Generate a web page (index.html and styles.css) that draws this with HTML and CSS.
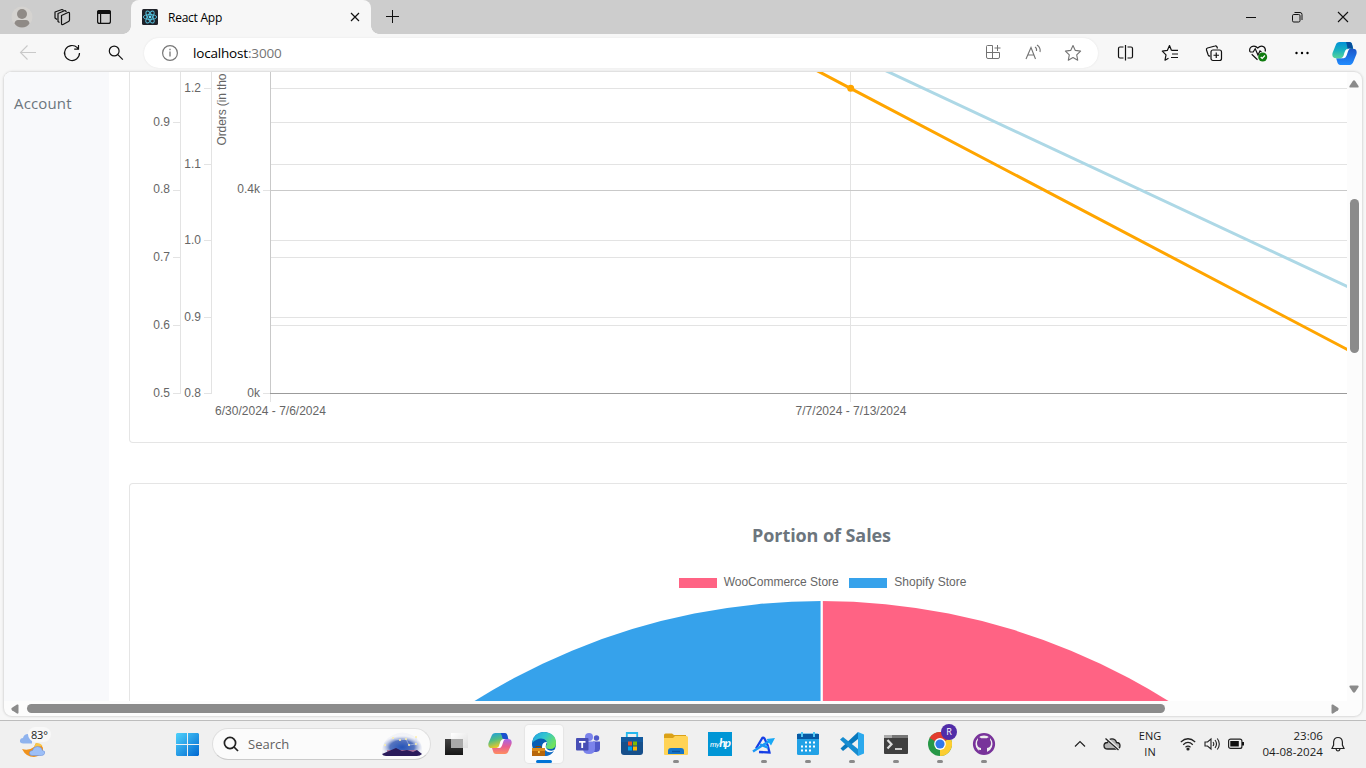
FILE: index.html
```html
<!DOCTYPE html>
<html lang="en">
<head>
<meta charset="utf-8">
<title>React App</title>
<link rel="stylesheet" href="styles.css">
</head>
<body>
<div class="screen">
  <header class="tabbar">
    <div class="tabbar-tools">
      <svg class="tool" viewBox="0 0 24 24" width="24" height="24"><circle cx="12" cy="12" r="10.500" fill="#d5d3d0"/><circle cx="12" cy="9" r="5" fill="#8f8a86"/><path d="M4.500 18.500Q5 15 8 15h8q3 0 3.500 3.500Q17 22.500 12 22.500T4.500 18.500z" fill="#8f8a86"/></svg>
      <svg class="tool" viewBox="0 0 24 24" width="24" height="24" fill="none" stroke="#111" stroke-width="1.200" stroke-linejoin="round"><path d="M11.500 10.500 18 7.500q1.500-.5 1.500 1v6.500q0 1-1 1.500l-5.500 3q-1.500.5-1.500-1z"/><path d="M9.500 17.500 8 16.500V8.500L15 5.500l1.500 1.300M7 14.500l-2-1.500V7l7-2.500 1.500.8"/></svg>
      <svg class="tool" viewBox="0 0 24 24" width="24" height="24"><rect x="5.600" y="5.600" width="12.800" height="12.800" rx="2" fill="none" stroke="#111" stroke-width="1.200"/><path d="M5 9V7q0-2 2-2h10q2 0 2 2v2zM8 9h1.200v9H8z" fill="#111"/></svg>
    </div>
    <div class="tab">
      <svg viewBox="0 0 16 16" width="16" height="16"><rect width="16" height="16" rx="1.500" fill="#20232a"/><g fill="none" stroke="#56c3df" stroke-width=".9"><ellipse cx="8" cy="8" rx="6.700" ry="2.500"/><ellipse cx="8" cy="8" rx="6.700" ry="2.500" transform="rotate(60 8 8)"/><ellipse cx="8" cy="8" rx="6.700" ry="2.500" transform="rotate(120 8 8)"/></g><circle cx="8" cy="8" r="1.400" fill="#61dafb"/></svg>
      <span class="tab-title">React App</span>
      <svg class="tab-close" viewBox="0 0 10 10" width="10" height="10"><path d="m1 1 8 8M9 1 1 9" stroke="#111" stroke-width="1.200"/></svg>
    </div>
    <svg class="tab-new" viewBox="0 0 14 14" width="14" height="14"><path d="M6.500 0v13M0 6.500h13" stroke="#111"/></svg>
    <div class="window-controls">
      <svg viewBox="0 0 12 12" width="12" height="12"><path d="M1 6.500h10" stroke="#111"/></svg>
      <svg viewBox="0 0 12 12" width="12" height="12" fill="none" stroke="#111"><rect x="1.500" y="3.500" width="7.500" height="7.500" rx="1.300"/><path d="M3.500 1.500H9q2 0 2 2V9"/></svg>
      <svg viewBox="0 0 12 12" width="12" height="12"><path d="m1 1 10 10M11 1 1 11" stroke="#111" stroke-width="1.100"/></svg>
    </div>
  </header>

  <nav class="toolbar">
    <div class="cell"><svg viewBox="0 0 20 20" width="20" height="20" fill="none" stroke="#c9c9c9" stroke-width="1.100"><path d="M18 9.500H2.500M9.500 2.500l-7 7 7 7"/></svg></div>
    <div class="cell"><svg viewBox="0 0 20 20" width="20" height="20" fill="none" stroke="#111" stroke-width="1.200"><path d="M17.500 10a7.500 7.500 0 1 1-2.200-5.300L16.500 6M16.500 2v4.200h-4.300"/></svg></div>
    <div class="cell"><svg viewBox="0 0 20 20" width="20" height="20" fill="none" stroke="#111" stroke-width="1.200"><circle cx="8.200" cy="8" r="4.900"/><path d="m11.800 11.600 5 5"/></svg></div>
    <div class="address">
      <svg viewBox="0 0 18 18" width="18" height="18"><circle cx="9" cy="9" r="7.400" fill="none" stroke="#777" stroke-width="1.200"/><path d="M9 7.600v5M9 4.800v1.500" stroke="#777" stroke-width="1.300"/></svg>
      <span class="url">localhost<span class="port">:3000</span></span>
      <div class="address-actions">
        <svg viewBox="0 0 20 20" width="20" height="20" fill="none" stroke="#737373"><path d="M9.500 2.500H4.500q-1 0-1 1V14q0 1.500 1.500 1.500h10q1.500 0 1.500-1.500V9.500h-13m6-7v13M14.500 2v6M11.500 5h6"/></svg>
        <svg viewBox="0 0 20 20" width="20" height="20" fill="none" stroke="#737373" stroke-width="1.100"><path d="M3 16 8 4.500 12.500 16M4.800 12H11M12 4q2 1.200 1.500 4M14 2q4 2.800 3 7"/></svg>
        <svg viewBox="0 0 20 20" width="20" height="20" fill="none" stroke="#737373" stroke-width="1.100" stroke-linejoin="round"><path d="m10 2.500 2.300 4.900 5.300.7-3.900 3.700 1 5.400-4.700-2.600-4.700 2.600 1-5.400L2.400 8.100l5.300-.7z"/></svg>
      </div>
    </div>
    <div class="actions">
      <div class="cell"><svg viewBox="0 0 20 20" width="20" height="20" fill="none" stroke="#111" stroke-width="1.200"><path d="M7.500 4H4Q2.500 4 2.500 5.500v8Q2.500 15 4 15h3.500m4-11H15q1.500 0 1.500 1.500v8q0 1.500-1.500 1.500h-3.500M9.500 2v15.500"/></svg></div>
      <div class="cell"><svg viewBox="0 0 20 20" width="20" height="20" fill="none" stroke="#111" stroke-width="1.200" stroke-linejoin="round"><path d="M11.500 7.400 9.500 2.500 7.300 7.400l-5 .7 3.700 3.700-1 5.400 3.500-2M11.500 7.400H18M12 11h6M11 14.500h7"/></svg></div>
      <div class="cell"><svg viewBox="0 0 20 20" width="20" height="20" fill="none" stroke="#111" stroke-width="1.200"><path d="M13.500 5.500 13 4q-.5-1.500-2-1L3.500 5Q2 5.500 2.500 7l1.700 5q.5 1.300 2 1.200"/><rect x="7" y="7" width="10.500" height="10.500" rx="2"/><path d="M12.250 9.500v5.500M9.500 12.250H15"/></svg></div>
      <div class="cell"><svg viewBox="0 0 20 20" width="20" height="20" fill="none" stroke="#111" stroke-width="1.200"><path d="M2 9Q.8 5.500 3.500 3.700 7 2 9.700 5q3-3 6-1.300Q18 5.500 17.200 8.500M2 9h3.200l2-3.200L10 12l2-4 1.500 1M3.700 11.300l5.800 5.500"/><circle cx="14.700" cy="14" r="4.500" fill="#107c10" stroke="none"/><path d="m12.700 14 1.500 1.500 2.700-3" stroke="#fff"/></svg></div>
      <div class="cell"><svg viewBox="0 0 20 20" width="20" height="20"><circle cx="4.500" cy="10" r="1.200"/><circle cx="10" cy="10" r="1.200"/><circle cx="15.500" cy="10" r="1.200"/></svg></div>
      <div class="cell cell-copilot"><svg viewBox="0 0 24 24" width="25" height="25"><defs><linearGradient id="cpA" x2="0" y2="1"><stop stop-color="#0091d8"/><stop offset=".5" stop-color="#18b0c0"/><stop offset="1" stop-color="#58d49a"/></linearGradient><linearGradient id="cpB" x2="0" y2="1"><stop stop-color="#1c56c9"/><stop offset="1" stop-color="#218cff"/></linearGradient></defs><path d="M16.500 7.500H20q4.500 0 3.500 5L20.500 20q-1 3-3.500 3H8q-2.500 0-3-3l-1-3.500h4.500q3 0 4-3.500l1-3.500q.8-2 3-2z" fill="url(#cpB)"/><path d="M7.500 1h9q2.500 0 3 3l.8 3.500H16q-3 0-4 3.500l-1 3.500q-.8 2-2.500 2H4q-4.500 0-3.500-5L3.500 4Q4.500 1 7.500 1z" fill="url(#cpA)"/><path d="M13.500 1h3q2.500 0 3 3l.8 3.500H16q-1.500 0-1.500-3z" fill="#064e9c"/><path d="M16 7.500q-2.500 0-3.300 2.500l-1.400 4.500q-.6 2-2.800 2h2.700q2 0 2.800-2.500l1.500-4.500q.5-2 2.500-2z" fill="#fff"/></svg></div>
    </div>
  </nav>

  <section class="viewport">
    <div class="page">
      <aside class="sidebar"><a class="nav-link">Account</a></aside>
      <main class="main">
        <div class="card card-line">
          <svg class="chart" viewBox="130 72 1217 370" width="1217" height="370">
            <path class="grid" d="M271 88.500H1347M271 122.500H1347M271 164.500H1347M271 240.500H1347M271 257.500H1347M271 317.500H1347M271 325.500H1347M850.500 72V402M270.500 394v8"/>
            <path class="grid" d="M180.500 72V394M211.500 72V394M173 122.500h7M173 190.500h7M173 257.500h7M173 325.500h7M173 393.500h7M204 88.500h7M204 164.500h7M204 240.500h7M204 317.500h7M204 393.500h7M263 190.500h7M263 393.500h7"/>
            <path d="M271 190.500H1347M270.500 72V393" stroke="#c9c9c9"/>
            <path d="M270 393.500H1347" stroke="#9b9b9b"/>
            <g class="tick end">
              <text x="170" y="126">0.9</text><text x="170" y="193">0.8</text><text x="170" y="261">0.7</text><text x="170" y="329">0.6</text><text x="170" y="397">0.5</text>
              <text x="201" y="92">1.2</text><text x="201" y="168">1.1</text><text x="201" y="244">1.0</text><text x="201" y="321">0.9</text><text x="201" y="397">0.8</text>
              <text x="260" y="193">0.4k</text><text x="260" y="397">0k</text>
            </g>
            <g class="tick mid"><text x="270.500" y="415">6/30/2024 - 7/6/2024</text><text x="851" y="415">7/7/2024 - 7/13/2024</text></g>
            <text class="tick" transform="translate(226 145.500) rotate(-90)" textLength="72">Orders (in tho</text>
            <path d="M880 68 1350 287.800" stroke="#add8e6" stroke-width="3"/>
            <path d="M811 67.500 850.500 88.300 1350 350.900" stroke="#ffa500" stroke-width="3" fill="none"/>
            <circle cx="850.700" cy="88.300" r="3.500" fill="#ffa500"/>
          </svg>
        </div>
        <div class="card card-pie">
          <h2 class="card-title">Portion of Sales</h2>
          <div class="legend">
            <span class="swatch swatch-woo"></span><span class="legend-woo">WooCommerce Store</span>
            <span class="swatch swatch-shopify"></span><span>Shopify Store</span>
          </div>
          <svg class="pie" viewBox="130 600 1217 101" width="1217" height="101">
            <path d="M821.500 601A652 652 0 0 0 821.500 1905z" fill="#36a2eb"/><path d="M821.500 601A652 652 0 0 1 821.500 1905z" fill="#ff6384"/><path d="M821.700 600V701" stroke="#fff" stroke-width="2.300"/>
          </svg>
        </div>
      </main>
    </div>
    <div class="vscroll">
      <svg viewBox="0 0 10 8" width="10" height="8"><path d="M3.800 1 .5 6q-.5 1.500 1 1.500h7q1.500 0 1-1.500L6.200 1Q5-.3 3.800 1z" fill="#8b8b8b"/></svg>
      <div class="vthumb"></div>
      <svg class="down" viewBox="0 0 10 8" width="10" height="8"><path d="M3.800 7 .5 2Q0 .5 1.500.5h7q1.500 0 1 1.500L6.200 7Q5 8.300 3.800 7z" fill="#8b8b8b"/></svg>
    </div>
    <div class="hscroll">
      <svg viewBox="0 0 8 10" width="8" height="10"><path d="M1 3.800 6 .5q1.500-.5 1.500 1v7q0 1.500-1.500 1L1 6.200Q-.3 5 1 3.800z" fill="#8b8b8b"/></svg>
      <div class="hthumb"></div>
      <svg class="right" viewBox="0 0 8 10" width="8" height="10"><path d="M7 3.800 2 .5Q.5 0 .5 1.500v7q0 1.500 1.500 1l5-3.300Q8.300 5 7 3.800z" fill="#8b8b8b"/></svg>
    </div>
  </section>

  <footer class="taskbar">
    <div class="weather">
      <svg viewBox="0 0 32 28" width="32" height="28"><path d="M2 17q7 2 12-2l2-4q8 2 7 7-2 6-9 7-8 0-12-8z" fill="#f0921c"/><path d="M14 15l2-4q5 0 6.500 3z" fill="#f8c64a"/><path d="M3 11.500q-4-.5-3-3.500.5-2 3-2 1-4 5-4 4 0 4 4v5.500z" fill="#8fb3ee"/><path d="M12 23.500q-3 0-2.500-3 .5-2 3-2 1-4 5-4t5 4q3 .5 2 3-.5 2-3 2z" fill="#9dbff7" stroke="#6b90da" stroke-width=".6"/></svg>
      <span class="temp">83°</span>
    </div>
    <svg class="start" viewBox="0 0 23 23" width="23" height="23"><defs><linearGradient id="win" gradientUnits="userSpaceOnUse" x2="23" y2="23"><stop stop-color="#4fd2fb"/><stop offset="1" stop-color="#0067d1"/></linearGradient></defs><path d="M1 0h10v11H0V1zM12 0h10l1 1v10H12zM0 12h11v11H1l-1-1zM12 12h11v10l-1 1H12z" fill="url(#win)"/></svg>
    <div class="search">
      <svg viewBox="0 0 16 16" width="16" height="16" fill="none" stroke="#222" stroke-width="1.700"><circle cx="7" cy="7" r="5.600"/><path d="m11 11 4 4"/></svg>
      <span>Search</span>
      <svg class="sky" viewBox="0 0 44 26" width="44" height="26"><defs><radialGradient id="sky" cx=".5" cy=".65"><stop stop-color="#2454b8"/><stop offset=".6" stop-color="#5674bf"/><stop offset="1" stop-color="#dce0f0" stop-opacity=".3"/></radialGradient></defs><path d="M2 24q-1-15 11-20 9-5 19 0 12 6 10 20z" fill="url(#sky)"/><path d="M7 19h30v5H7z" fill="#b56c91" opacity=".8"/><path d="m2 23 7-3 7-3 6 3 5-1 6 2 4-2 5 4q-2 2-5 2H6q-3 0-4-2z" fill="#2a1b5b"/><path d="m5 14 8-7 7 2 6-1 3 6 7-1V6" fill="none" stroke="#c9d2ef" stroke-width=".5"/><g fill="#fff0a8"><circle cx="13" cy="7" r="1"/><circle cx="20" cy="9" r="1"/><circle cx="26" cy="8" r="1"/><circle cx="29" cy="14" r="1"/><circle cx="36" cy="13" r="1"/><circle cx="36" cy="6" r="1"/><circle cx="5" cy="14" r="1"/></g></svg>
    </div>
    <div class="apps">
      <div class="app"><svg viewBox="0 0 24 24" width="24" height="24"><defs><linearGradient id="tv" x2="0" y2="1"><stop stop-color="#444"/><stop offset="1" stop-color="#161616"/></linearGradient><linearGradient id="tw" x2="1" y2="1"><stop stop-color="#fff"/><stop offset="1" stop-color="#dedede"/></linearGradient></defs><path d="M1 7h18v16H1z" fill="url(#tv)"/><path d="M7 1h17v15H7z" fill="url(#tw)"/><path d="M7 7h12v9H7z" fill="#a9a9a9"/></svg></div>
      <div class="app"><svg viewBox="0 0 24 24" width="24" height="24"><defs><linearGradient id="c1" x2=".4" y2="1"><stop stop-color="#1b9be8"/><stop offset=".5" stop-color="#50bd83"/><stop offset="1" stop-color="#f7c921"/></linearGradient><linearGradient id="c2" x2="0" y2="1"><stop stop-color="#a465eb"/><stop offset=".5" stop-color="#e75e91"/><stop offset="1" stop-color="#ff8e60"/></linearGradient></defs><path d="M16.500 7H20q4.500 0 3.500 5L20.500 19q-1 3-3.500 3H8q-2.500 0-3-3l-1-3h4.500q3 0 4-3.500l1-3.500q.8-2 3-2z" fill="url(#c2)"/><path d="M7.500 1h9q2.500 0 3 3l.8 3H16q-3 0-4 3.500L11 14q-.8 2-2.500 2H4q-4.500 0-3.500-5L3.500 4Q4.500 1 7.500 1z" fill="url(#c1)"/><path d="M12.500 1h4q2.500 0 3 3l.8 3H16q-2 0-2-3z" fill="#1a4fd0"/><path d="M16 7q-2.500 0-3.300 2.500L11.300 14q-.6 2-2.800 2h2.700q2 0 2.800-2.500L15.500 9q.5-2 2.500-2z" fill="#fff"/></svg></div>
      <div class="app active"><svg viewBox="0 0 26 26" width="26" height="26"><defs><linearGradient id="ed" x2="1" y2=".6"><stop stop-color="#219ee5"/><stop offset=".5" stop-color="#32c6cf"/><stop offset="1" stop-color="#72e35b"/></linearGradient></defs><circle cx="13" cy="13" r="12" fill="#075eb5"/><path d="M1 12Q3 1 13 1q12 1 12 11 0 6-6 6-5 0-4-3 3-4-2-7Q7 6 1 12z" fill="url(#ed)"/><path d="M11 16q0-5 5-5-3 5 1 8 4 2 8-1-3 7-8 7-6-3-6-9z" fill="#fff"/><path d="M14 19q4 4 9 1-3 5-9 5-4-3-4-8 1 2 4 2z" fill="#146cc2"/><path d="M1 17h13v8H1z" fill="#b8670a"/><path d="M1 17h13v3H1z" fill="#dc8b1c"/><path d="M5 17v-1.500h5V17" stroke="#8a4700" fill="none"/><path d="M7 20h1.800v2H7z" fill="#ffd453"/></svg></div>
      <div class="app"><svg viewBox="0 0 24 24" width="24" height="24"><circle cx="13" cy="5" r="4" fill="#7b83eb"/><circle cx="20.500" cy="6" r="2.700" fill="#5059c9"/><path d="M17 9.500h7v7q0 3-3.500 3.500H17z" fill="#5059c9"/><path d="M7 9.500h12v7q0 5.500-6 5.500t-6-5.500z" fill="#7b83eb"/><rect y="6" width="12.500" height="12.500" rx="1" fill="#474eb5"/><path d="M3 9h6.500v1.700H7.100V16H5.300v-5.300H3z" fill="#fff"/></svg></div>
      <div class="app"><svg viewBox="0 0 24 24" width="24" height="24"><path d="M6.800 6V1h10.400v5" fill="none" stroke="#25b8ee" stroke-width="1.800"/><path d="M1 5h22v15q0 3-3 3H4q-3 0-3-3z" fill="#164f8b"/><path d="M1 5h22v5H1z" fill="#125da4" opacity=".8"/><path d="M8 9.500h4v4H8z" fill="#f15024"/><path d="M13 9.500h4v4h-4z" fill="#7fbb02"/><path d="M8 14.500h4v4H8z" fill="#00a5ef"/><path d="M13 14.500h4v4h-4z" fill="#ffb902"/></svg></div>
      <div class="app running"><svg viewBox="0 0 24 24" width="24" height="24"><path d="M0 3q0-1.500 1.500-1.500H8L10 3h12v6H0z" fill="#dba117"/><path d="M0 6h9l2-2h11.500Q24 4 24 5.500V22q0 1-1 1H1q-1 0-1-1z" fill="#ffd356"/><path d="M4 22v-3q0-3 3-3h10q3 0 3 3v3z" fill="#1475ca"/><path d="M8 19.500h8" stroke="#0b559f" stroke-width="1.500"/></svg></div>
      <div class="app"><div class="myhp">my<b>hp</b></div></div>
      <div class="app running"><svg viewBox="0 0 24 24" width="24" height="24" fill="none"><path d="m4 16.500 6-10q1-1.500 2.500 0 4 7 5 14L7 20" stroke="#173fe5" stroke-width="2.300"/><path d="M1 19.500 18 8.500M8 12.500l8 3" stroke="#1b98f5" stroke-width="2.500"/><path d="m14.500 7 8.500-1-4 7.500z" fill="#18a8f5"/></svg></div>
      <div class="app running"><svg viewBox="0 0 24 24" width="24" height="24"><rect x="1" y="1.500" width="22" height="21.500" rx="1.500" fill="#22a2e6"/><path d="M1 2h22v5H1z" fill="#075aa4"/><path d="M5 0h2v5H5zM17 0h2v5h-2z" fill="#4fc7f3"/><path d="M9 10.500h2M13 10.500h2M17 10.500h2M5 14.500h2M9 14.500h2M13 14.500h2M17 14.500h2M5 18.500h2M9 18.500h2M13 18.500h2" stroke="#fff" stroke-width="2"/></svg></div>
      <div class="app running"><svg viewBox="0 0 24 24" width="24" height="24"><path d="M18 0v7L3 19l-2.500-2.500z" fill="#0878bd"/><path d="M0 7.500 3 5l15 12v7z" fill="#168cd0"/><path d="m18 0 6 2.500v19L18 24z" fill="#2ba9ed"/></svg></div>
      <div class="app running"><svg viewBox="0 0 24 20" width="24" height="20"><rect width="24" height="19" y="1" rx="1" fill="#3f3f3f"/><path d="M0 1h24v3H0z" fill="#777"/><path d="M0 1h8v3H0z" fill="#aaa"/><path d="m3.500 6 4 4.300-4 4.200" fill="none" stroke="#ddd" stroke-width="2.200"/><path d="M11 15h7" stroke="#fff" stroke-width="1.500"/></svg></div>
      <div class="app running"><svg viewBox="0 0 24 24" width="24" height="24"><circle cx="12" cy="12" r="12" fill="#279847"/><path d="M12 12 1.600 6A12 12 0 0 1 22.400 6z" fill="#e33b2e"/><path d="M12 12 22.400 6A12 12 0 0 1 12 24z" fill="#fccd31"/><circle cx="12" cy="12" r="5.900" fill="#fff"/><circle cx="12" cy="12" r="4.600" fill="#3178ea"/></svg><span class="badge">R</span></div>
      <div class="app running"><svg viewBox="0 0 24 24" width="24" height="24"><circle cx="12" cy="12" r="9.800" fill="#eee" stroke="#78339a" stroke-width="2.600"/><path d="M9 21v-3q-3 .5-4-2M9 18v-2q-4-.5-4-5 0-1.800 1-3-.3-1.500.2-3 1.500 0 3 1.200h5.600Q16.300 5 17.800 5q.5 1.500.2 3 1 1.200 1 3 0 4.500-4 5v6H9z" fill="#78339a"/></svg></div>
    </div>
    <div class="tray">
      <svg viewBox="0 0 12 12" width="12" height="12" fill="none" stroke="#222" stroke-width="1.200"><path d="m1 8.500 5-5 5 5"/></svg>
      <svg class="cloud" viewBox="0 0 18 14" width="18" height="14"><path d="M4.800 12Q1 12 1 8.800t3.500-3.300Q5.500 1.800 9 1.800t4.500 3.700Q17 5.600 17 8.800T13.200 12z" fill="#b5b5b5" stroke="#222" stroke-width="1.300"/><path d="m3 1 13 12" stroke="#f0f0f0" stroke-width="3"/><path d="m2.500 1.500 13 11.500" stroke="#222" stroke-width="1.300"/></svg>
      <span class="lang">ENG<br>IN</span>
      <svg class="wifi" viewBox="0 0 16 14" width="16" height="14" fill="none" stroke="#222" stroke-width="1.200"><path d="M.8 5q7.200-6.500 14.400 0M3.200 7.700q4.800-4.500 9.600 0M5.500 10.200q2.500-2.200 5 0"/><circle cx="8" cy="12" r="1" fill="#222"/></svg>
      <svg class="sound" viewBox="0 0 17 14" width="17" height="14" fill="none" stroke="#222" stroke-width="1.100"><path d="M1 5h2.500L7 2v10L3.500 9H1zM9 5q1.600 2 0 4M11 3q3 4 0 8M13.300 1.500q4 5.500 0 11"/></svg>
      <svg class="battery" viewBox="0 0 17 12" width="17" height="12"><rect x=".6" y="1.100" width="13.300" height="9.300" rx="2" fill="none" stroke="#222" stroke-width="1.200"/><path d="M2.300 3h8.500v5.500H2.300zM14 4h2v3.500h-2z" fill="#111"/></svg>
      <span class="clock">23:06<br>04-08-2024</span>
      <svg class="bell" viewBox="0 0 14 16" width="14" height="16" fill="none" stroke="#222" stroke-width="1.200"><path d="M1 12.500 2.600 9V6Q3 1.500 7 1.500T11.400 6v3l1.600 3.500zM5 13q.5 2 2 2t2-2"/></svg>
    </div>
  </footer>
</div>
</body>
</html>
```
FILE: styles.css
```css
* { box-sizing: border-box; }
body { margin: 0; font-family: "Open Sans", "Noto Sans", sans-serif; color: #1b1b1b; }
svg { display: block; flex: none; }
.screen { width: 1366px; height: 768px; display: flex; flex-direction: column; overflow: hidden; background: #f7f7f7; }

.tabbar { height: 34px; flex: none; display: flex; align-items: center; background: #cdcdcd; }
.tabbar-tools { display: flex; gap: 18px; width: 131px; padding-left: 10px; }
.tabbar-tools .tool:first-child { margin-right: -2px; }
.tab { position: relative; width: 240px; height: 34px; display: flex; align-items: center; padding: 0 11px; background: #f7f7f7; border-radius: 8px 8px 0 0; }
.tab::before, .tab::after { content: ""; position: absolute; bottom: 0; width: 8px; height: 8px; }
.tab::before { left: -8px; background: radial-gradient(circle at 0 0, transparent 7.500px, #f7f7f7 8px); }
.tab::after { right: -8px; background: radial-gradient(circle at 100% 0, transparent 7.500px, #f7f7f7 8px); }
.tab-title { margin-left: 10px; font-size: 12px; letter-spacing: -.25px; color: #000; }
.tab-close { margin-left: auto; }
.tab-new { margin-left: 15px; }
.window-controls { display: flex; gap: 34px; margin-left: auto; padding-right: 17px; }

.toolbar { height: 38px; flex: none; display: flex; align-items: center; padding-left: 6px; }
.cell { width: 44.200px; display: flex; justify-content: center; }
.address { width: 954px; height: 30px; margin-left: 5.400px; display: flex; align-items: center; padding: 0 15px 0 17px; background: #fff; border-radius: 15px; box-shadow: 0 0 2px #e2e2e2; }
.url { margin-left: 14px; font-size: 13.500px; letter-spacing: -.17px; color: #000; }
.port { color: #757575; }
.address-actions { display: flex; gap: 20px; margin-left: auto; }
.actions { display: flex; align-items: center; margin-left: 5.500px; }
.cell-copilot { width: 40px; }

.viewport { width: 1358px; height: 644px; flex: none; margin-left: 4px; display: grid; grid-template: 629px 15px / 1343px 15px; overflow: hidden; border-radius: 8px; background: #fcfcfc; box-shadow: 0 0 2px 1px #d9d9d9; }
.page { display: flex; overflow: hidden; background: #fff; }
.sidebar { width: 105px; flex: none; padding: 20px 10px; background: #f8f9fb; }
.nav-link { font-size: 15px; line-height: 22px; letter-spacing: .15px; color: #6c757d; }
.main { flex: none; width: 1258px; padding-left: 20px; display: flex; flex-direction: column; gap: 40px; }
.card { border: 1px solid #e5e5e5; }
.card-line { height: 371px; flex: none; border-top: 0; border-radius: 0 0 4px 4px; }
.card-pie { height: 240px; flex: none; border-bottom: 0; border-radius: 4px 4px 0 0; }
.grid { stroke: #e3e3e3; fill: none; }
.tick { font: 12px "Liberation Sans", Arial, sans-serif; fill: #666; }
.end { text-anchor: end; }
.mid { text-anchor: middle; }
.card-title { width: 1383px; margin: 38px 0 0; text-align: center; font-size: 18px; line-height: 26px; font-weight: 700; letter-spacing: -.08px; color: #6c757d; }
.legend { width: 1385px; display: flex; align-items: center; justify-content: center; margin-top: 27px; height: 14px; font: 12px/14px "Liberation Sans", Arial, sans-serif; color: #666; }
.swatch { width: 38px; height: 10px; margin: 2px 7px 0 0; }
.swatch-woo { background: #ff6384; }
.swatch-shopify { background: #36a2eb; }
.legend-woo { margin-right: 10.500px; }
.pie { margin-top: 11px; }
.vscroll { display: flex; flex-direction: column; align-items: center; padding: 8px 1px 0 0; }
.vthumb { width: 9px; height: 154px; margin: 111px 0 0 1px; border-radius: 5px; background: #8b8b8b; }
.down { margin-top: 332px; }
.hscroll { grid-column: 1; display: flex; align-items: center; padding-left: 7px; }
.hthumb { width: 1138px; height: 9px; margin-left: 8px; border-radius: 5px; background: #8b8b8b; }
.right { margin-left: 166px; }

.taskbar { height: 48px; flex: none; margin-top: 4px; padding-bottom: 1px; display: flex; align-items: center; border-top: 1px solid #bdbdbd; background: #f0f0f0; }
.weather { position: relative; width: 156px; margin-left: 20px; padding-top: 3px; }
.temp { position: absolute; left: 8px; top: -2px; padding: 0 3px; border-radius: 8px; background: #f8f8f8; font-size: 11px; line-height: 15px; letter-spacing: -.2px; }
.search { width: 219px; height: 32px; margin-left: 13px; display: flex; align-items: center; padding: 0 6px 0 10px; border: 1px solid #dfdfdf; border-bottom-color: #cbcbcb; border-radius: 16px; background: #fbfbfb; font-size: 13px; color: #626262; }
.search span { margin-left: 9px; }
.sky { margin-left: auto; }
.apps { display: flex; margin-left: 3px; }
.app { position: relative; width: 44px; height: 38px; display: flex; align-items: center; justify-content: center; }
.app.active { width: 38px; margin: 0 3px; background: #fbfbfb; border-radius: 4px; box-shadow: 0 0 1px 1px #e5e5e5; }
.app.running::after, .app.active::after { content: ""; position: absolute; bottom: 0; width: 6px; height: 3px; border-radius: 2px; background: #8a8a8a; }
.app.active::after { width: 16px; background: #0074d6; }
.myhp { width: 24px; height: 24px; background: #0096d6; color: #fff; font: italic 8px/22px Lato, sans-serif; text-align: center; letter-spacing: -.4px; }
.myhp b { font-size: 12px; letter-spacing: -1px; }
.badge { position: absolute; left: 23px; top: -1px; width: 16px; height: 16px; border-radius: 50%; background: #512da8; color: #fff; font-size: 9px; line-height: 16px; text-align: center; }
.tray { display: flex; align-items: center; margin-left: 68px; font-size: 11px; line-height: 16px; color: #1b1b1b; }
.cloud { margin-left: 17px; }
.lang { width: 30px; margin-left: 14px; text-align: center; }
.wifi { margin-left: 15px; }
.sound { margin-left: 8px; }
.battery { margin-left: 7px; }
.clock { width: 78px; text-align: right; font-size: 11.500px; letter-spacing: .05px; }
.bell { margin-left: 8px; }
```
